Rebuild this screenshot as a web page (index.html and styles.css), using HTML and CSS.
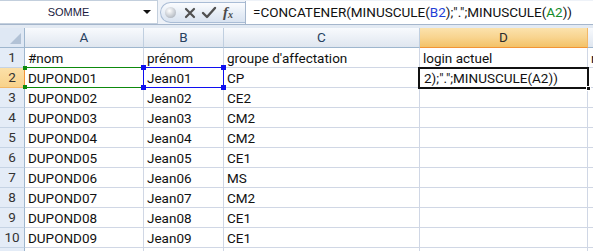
FILE: index.html
```html
<!DOCTYPE html>
<html lang="fr">
<head>
<meta charset="utf-8">
<link rel="stylesheet" href="styles.css">
</head>
<body>
<div class="app">
  <div class="fbar">
    <div class="namebox">
      <span class="name">SOMME</span>
      <span class="drop"></span>
    </div>
    <div class="pill">
      <span class="dot"></span>
      <svg class="ico" width="14" height="14" viewBox="0 0 14 14"><path d="M3 3 L11 11 M11 3 L3 11" stroke="#505050" stroke-width="2.2" stroke-linecap="round"/></svg>
      <svg class="ico" width="16" height="14" viewBox="0 0 16 14"><path d="M2 7 L6 11 L14 2" stroke="#505050" stroke-width="2.4" fill="none" stroke-linecap="round" stroke-linejoin="round"/></svg>
      <span class="fx">f<sub>x</sub></span>
    </div>
    <div class="finput">=CONCATENER(MINUSCULE(<span class="rb">B2</span>);".";MINUSCULE(<span class="rg">A2</span>))</div>
  </div>
  <div class="strip"></div>
  <div class="sheet">
    <div class="corner"><span class="tri"></span></div>
    <div class="ch">A</div>
    <div class="ch">B</div>
    <div class="ch">C</div>
    <div class="ch sel">D</div>
    <div class="ch">E</div>

    <div class="rh">1</div><div class="c">#nom</div><div class="c">prénom</div><div class="c">groupe d'affectation</div><div class="c">login actuel</div><div class="c">nouveau</div>
    <div class="rh sel">2</div><div class="c">DUPOND01</div><div class="c">Jean01</div><div class="c">CP</div><div class="c edit">2);".";MINUSCULE(A2))</div><div class="c"></div>
    <div class="rh">3</div><div class="c">DUPOND02</div><div class="c">Jean02</div><div class="c">CE2</div><div class="c"></div><div class="c"></div>
    <div class="rh">4</div><div class="c">DUPOND03</div><div class="c">Jean03</div><div class="c">CM2</div><div class="c"></div><div class="c"></div>
    <div class="rh">5</div><div class="c">DUPOND04</div><div class="c">Jean04</div><div class="c">CM2</div><div class="c"></div><div class="c"></div>
    <div class="rh">6</div><div class="c">DUPOND05</div><div class="c">Jean05</div><div class="c">CE1</div><div class="c"></div><div class="c"></div>
    <div class="rh">7</div><div class="c">DUPOND06</div><div class="c">Jean06</div><div class="c">MS</div><div class="c"></div><div class="c"></div>
    <div class="rh">8</div><div class="c">DUPOND07</div><div class="c">Jean07</div><div class="c">CM2</div><div class="c"></div><div class="c"></div>
    <div class="rh">9</div><div class="c">DUPOND08</div><div class="c">Jean08</div><div class="c">CE1</div><div class="c"></div><div class="c"></div>
    <div class="rh">10</div><div class="c">DUPOND09</div><div class="c">Jean09</div><div class="c">CE1</div><div class="c"></div><div class="c"></div>
    <div class="rh"></div><div class="c"></div><div class="c"></div><div class="c"></div><div class="c"></div><div class="c"></div>

    <div class="ref ref-a"><i class="h tl"></i><i class="h tr"></i><i class="h bl"></i><i class="h br"></i></div>
    <div class="ref ref-b"><i class="h tl"></i><i class="h tr"></i><i class="h bl"></i><i class="h br"></i></div>
    <div class="active"><i class="fill"></i></div>
  </div>
</div>
</body>
</html>
```
FILE: styles.css
```css
* { box-sizing: border-box; }
html, body { margin: 0; padding: 0; background: #fff; }
body { width: 593px; height: 251px; overflow: hidden; font-family: Roboto, "Liberation Sans", sans-serif; }

.app { width: 593px; height: 251px; overflow: hidden; }

.fbar {
  height: 25px;
  display: flex;
  align-items: stretch;
  background: #eef2f8;
  border-bottom: 1px solid #a5b6cc;
}
.namebox {
  width: 158px;
  background: #fff;
  border: 1px solid #c3cfdd;
  border-left: none;
  display: flex;
  align-items: center;
  position: relative;
}
.name {
  flex: 1;
  text-align: center;
  font-family: "Liberation Sans", sans-serif;
  font-size: 11px;
  color: #1a1a40;
  padding-right: 16px;
  padding-left: 10px;
}
.drop {
  width: 0; height: 0;
  border-left: 4px solid transparent;
  border-right: 4px solid transparent;
  border-top: 4px solid #111;
  margin-right: 6px;
}
.pill {
  margin: 2px 0 1px 2px;
  width: 85px;
  border: 1px solid #a9bcd5;
  border-right: none;
  border-radius: 11px 0 0 11px;
  background: linear-gradient(#fbfcfe, #e6edf6 55%, #d9e3f0);
  display: flex;
  align-items: center;
  padding-left: 4px;
  gap: 4px;
}
.dot {
  width: 11px; height: 11px;
  border-radius: 50%;
  background: radial-gradient(circle at 40% 35%, #ffffff, #c3c8cf 60%, #9aa2ad);
  margin-right: 3px;
}
.ico { display: block; }
.fx {
  font-family: "Liberation Serif", serif;
  font-style: italic;
  font-weight: bold;
  font-size: 15px;
  color: #4a4a4a;
  margin-left: 2px;
  line-height: 1;
}
.fx sub { font-size: 10px; vertical-align: -1px; }
.finput {
  flex: 1;
  background: #fff;
  border-left: 1px solid #a5b6cc;
  margin-top: 1px;
  padding-left: 7px;
  font-size: 13.5px;
  line-height: 23px;
  color: #111;
  white-space: nowrap;
  overflow: hidden;
}
.rb { color: #1f3fd6; }
.rg { color: #138a2a; }

.strip { height: 3px; background: #e3eaf3; }

.sheet {
  position: relative;
  display: grid;
  grid-template-columns: 25px 119px 80px 196px 168px 20px;
  grid-auto-rows: 20px;
  font-size: 13.5px;
  color: #111;
}
.corner {
  background: #dfe8f4;
  border-right: 1px solid #9eb6ce;
  border-bottom: 1px solid #9eb6ce;
  position: relative;
}
.tri {
  position: absolute;
  right: 3px; bottom: 3px;
  width: 0; height: 0;
  border-left: 11px solid transparent;
  border-bottom: 11px solid #b2c2d6;
}
.ch {
  background: linear-gradient(#f8fafd, #e9eef5 60%, #dfe6ef);
  border-right: 1px solid #c0cfe0;
  border-bottom: 1px solid #9eb6ce;
  text-align: center;
  line-height: 19px;
  color: #27415f;
  font-size: 13.5px;
}
.ch.sel {
  background: linear-gradient(#fbe2ad, #f8d48f 50%, #f3c267);
  border-bottom: 1px solid #f29436;
  border-right: 1px solid #f2b868;
  color: #2b2b2b;
}
.rh {
  background: #e4ecf7;
  border-right: 1px solid #9eb6ce;
  border-bottom: 1px solid #c5d3e4;
  text-align: center;
  line-height: 19px;
  color: #333;
  font-size: 13.5px;
}
.rh.sel {
  background: linear-gradient(#fbe0a8, #f8d28b);
  border-right: 1px solid #f29436;
  border-bottom: 1px solid #f2b868;
}
.c {
  border-right: 1px solid #d0d7e5;
  border-bottom: 1px solid #d0d7e5;
  padding-left: 3px;
  line-height: 20px;
  white-space: nowrap;
  overflow: hidden;
}
.edit { padding-left: 4px; }

.ref { position: absolute; top: 39px; height: 21px; }
.ref-a { left: 24px; width: 120px; border: 1px solid #0d8a0d; border-left-color: transparent; }
.ref-b { left: 143px; width: 81px; border: 1px solid #1010f0; }
.h { position: absolute; width: 4px; height: 4px; }
.ref-a .h { background: #0d8a0d; }
.ref-b .h { background: #1010f0; width: 5px; height: 5px; }
.tl { left: -2px; top: -2px; }
.tr { right: -2px; top: -2px; }
.bl { left: -2px; bottom: -2px; }
.br { right: -2px; bottom: -2px; }
.ref-b .tl { left: -3px; top: -3px; }
.ref-b .tr { right: -3px; top: -3px; }
.ref-b .bl { left: -3px; bottom: -3px; }
.ref-b .br { right: -3px; bottom: -3px; }

.active {
  position: absolute;
  left: 418px; top: 39px;
  width: 171px; height: 22px;
  border: 2px solid #111;
}
.fill {
  position: absolute;
  right: -4px; bottom: -4px;
  width: 5px; height: 5px;
  background: #111;
  border: 1px solid #fff;
}
```
